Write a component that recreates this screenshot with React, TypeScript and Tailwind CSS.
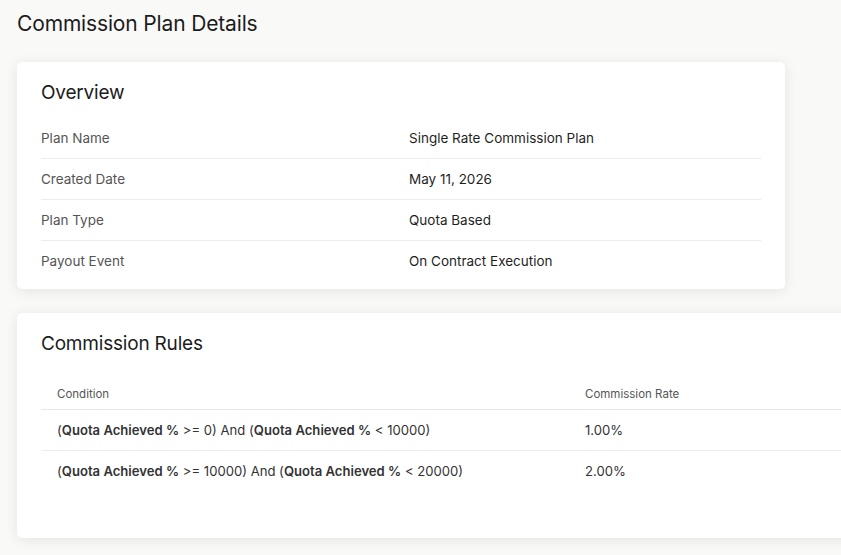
import React from 'react';

type Rule = { field: string; min: string; max: string; rate: string };

const overview: { label: string; value: string }[] = [
  { label: 'Plan Name', value: 'Single Rate Commission Plan' },
  { label: 'Created Date', value: 'May 11, 2026' },
  { label: 'Plan Type', value: 'Quota Based' },
  { label: 'Payout Event', value: 'On Contract Execution' },
];

const rules: Rule[] = [
  { field: 'Quota Achieved %', min: '0', max: '10000', rate: '1.00%' },
  { field: 'Quota Achieved %', min: '10000', max: '20000', rate: '2.00%' },
];

const cardClass = 'bg-white rounded-[5px] shadow-[0_2px_14px_rgba(0,0,0,0.09)]';

export default function App() {
  return (
    <div
      className="w-screen h-screen overflow-hidden bg-[#f9f9f8] text-[#2a2a2a]"
      style={{ fontFamily: 'Inter, "Noto Sans", sans-serif' }}
    >
      <div className="pl-[17px] pt-[10px]">
        <h1 className="text-[21px] leading-[28px] font-normal text-[#1c1c1c] tracking-[-0.15px]">
          Commission Plan Details
        </h1>

        <div className={`${cardClass} w-[768px] mt-[24px] px-6 pt-[17px] pb-[7px]`}>
          <h2 className="text-[19px] leading-[28px] text-[#1c1c1c] tracking-[-0.2px]">Overview</h2>
          <div className="mt-[11px]">
            {overview.map((row, i) => (
              <div
                key={row.label}
                className={`flex items-center h-[41px] text-[13.5px] ${
                  i < overview.length - 1 ? 'border-b border-[#ececec]' : ''
                }`}
              >
                <div className="w-[368px] text-[#555555]">{row.label}</div>
                <div className="text-[#1f1f1f]">{row.value}</div>
              </div>
            ))}
          </div>
        </div>

        <div className={`${cardClass} w-[900px] mt-6 px-6 pt-[17px] pb-[47px]`}>
          <h2 className="text-[19px] leading-[28px] text-[#1c1c1c] tracking-[-0.2px]">Commission Rules</h2>
          <table className="w-full mt-5 border-collapse text-left">
            <thead>
              <tr className="border-b border-[#e8e8e8]">
                <th className="w-[528px] h-[31px] px-4 pt-[2px] text-[11.5px] font-normal text-[#555555]">Condition</th>
                <th className="h-[31px] px-4 pt-[2px] text-[11.5px] font-normal text-[#555555]">Commission Rate</th>
              </tr>
            </thead>
            <tbody>
              {rules.map((r, i) => (
                <tr key={i} className={i < rules.length - 1 ? 'border-b border-[#ececec]' : ''}>
                  <td className="h-[41px] px-4 pt-[2px] text-[13.1px] text-[#333333]">
                    (<span className="font-semibold">{r.field}</span> &gt;= {r.min}) And (
                    <span className="font-semibold">{r.field}</span> &lt; {r.max})
                  </td>
                  <td className="h-[41px] px-4 pt-[2px] text-[13.1px] text-[#333333]">{r.rate}</td>
                </tr>
              ))}
            </tbody>
          </table>
        </div>
      </div>
    </div>
  );
}
